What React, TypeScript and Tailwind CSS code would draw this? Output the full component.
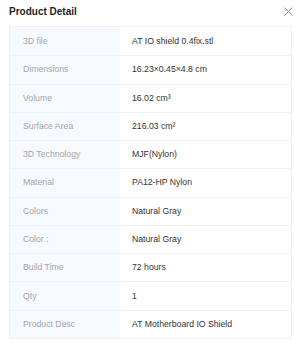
const rows: [string, string][] = [
  ["3D file", "AT IO shield 0.4fix.stl"],
  ["Dimensions", "16.23×0.45×4.8 cm"],
  ["Volume", "16.02 cm³"],
  ["Surface Area", "216.03 cm²"],
  ["3D Technology", "MJF(Nylon)"],
  ["Material", "PA12-HP Nylon"],
  ["Colors", "Natural Gray"],
  ["Color :", "Natural Gray"],
  ["Build Time", "72 hours"],
  ["Qty", "1"],
  ["Product Desc", "AT Motherboard IO Shield"],
];

export default function App() {
  return (
    <div className="h-[347px] w-[301px] bg-white font-['Liberation_Sans',Arial,sans-serif]">
      <div className="flex h-[26px] items-center justify-between pb-[4px] pl-[9px] pr-[8px]">
        <h2 className="text-[10px] font-bold text-[#1f1f1f]">Product Detail</h2>
        <button className="text-[#8c8c8c]" aria-label="Close">
          <svg width="9" height="9" viewBox="0 0 9 9" fill="none" stroke="currentColor" strokeWidth="1">
            <path d="M0.5 0.5 L8.5 8.5 M8.5 0.5 L0.5 8.5" />
          </svg>
        </button>
      </div>
      <div className="mx-[9px] border border-[#eef1f6]">
        {rows.map(([label, value], i) => (
          <div
            key={i}
            className={`flex h-[28.27px] text-[8.7px] ${i > 0 ? "border-t border-[#eef1f6]" : ""}`}
          >
            <div className="flex w-[110px] shrink-0 items-center bg-[#f6f9fd] pl-[13px] text-[#a6a6a6]">
              {label}
            </div>
            <div className="flex flex-1 items-center pl-[12px] text-[#333]">{value}</div>
          </div>
        ))}
      </div>
    </div>
  );
}
